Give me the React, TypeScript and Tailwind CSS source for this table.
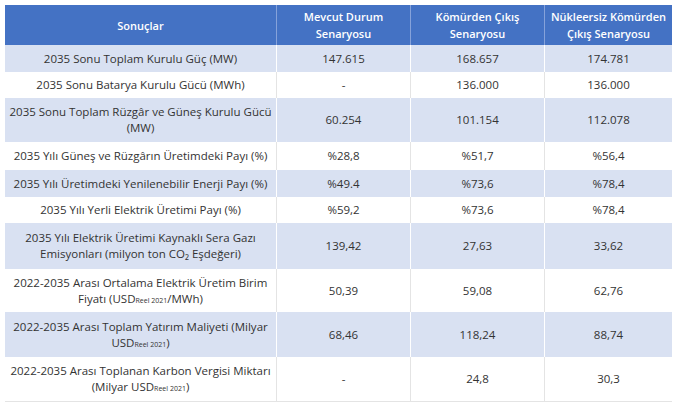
import type { ReactNode } from "react";

type Row = { label: ReactNode; vals: string[]; h: string; blue: boolean };

const Usd = () => (
  <>
    USD<span className="text-[7px] leading-none">Reel 2021</span>
  </>
);

const rows: Row[] = [
  { label: "2035 Sonu Toplam Kurulu Güç (MW)", vals: ["147.615", "168.657", "174.781"], h: "h-[27px]", blue: true },
  { label: "2035 Sonu Batarya Kurulu Gücü (MWh)", vals: ["-", "136.000", "136.000"], h: "h-[26px]", blue: false },
  {
    label: (
      <>
        2035 Sonu Toplam Rüzgâr ve Güneş Kurulu Gücü
        <br />
        (MW)
      </>
    ),
    vals: ["60.254", "101.154", "112.078"],
    h: "h-[44px]",
    blue: true,
  },
  { label: "2035 Yılı Güneş ve Rüzgârın Üretimdeki Payı (%)", vals: ["%28,8", "%51,7", "%56,4"], h: "h-[28px]", blue: false },
  { label: "2035 Yılı Üretimdeki Yenilenebilir Enerji Payı (%)", vals: ["%49.4", "%73,6", "%78,4"], h: "h-[27px]", blue: true },
  { label: "2035 Yılı Yerli Elektrik Üretimi Payı (%)", vals: ["%59,2", "%73,6", "%78,4"], h: "h-[26px]", blue: false },
  {
    label: (
      <>
        2035 Yılı Elektrik Üretimi Kaynaklı Sera Gazı
        <br />
        Emisyonları (milyon ton CO₂ Eşdeğeri)
      </>
    ),
    vals: ["139,42", "27,63", "33,62"],
    h: "h-[46px]",
    blue: true,
  },
  {
    label: (
      <>
        2022-2035 Arası Ortalama Elektrik Üretim Birim
        <br />
        Fiyatı (<Usd />/MWh)
      </>
    ),
    vals: ["50,39", "59,08", "62,76"],
    h: "h-[43px]",
    blue: false,
  },
  {
    label: (
      <>
        2022-2035 Arası Toplam Yatırım Maliyeti (Milyar
        <br />
        <Usd />)
      </>
    ),
    vals: ["68,46", "118,24", "88,74"],
    h: "h-[45px]",
    blue: true,
  },
  {
    label: (
      <>
        2022-2035 Arası Toplanan Karbon Vergisi Miktarı
        <br />
        (Milyar <Usd />)
      </>
    ),
    vals: ["-", "24,8", "30,3"],
    h: "h-[44px]",
    blue: false,
  },
];

const cols = "grid grid-cols-[271px_134px_134px_128px]";

export default function App() {
  return (
    <div className="w-[685px] h-[410px] bg-white pt-[5px] pl-[5px] font-['Open_Sans',sans-serif] text-[#333333]">
      <div className="w-[667px] border-b border-[#e4e4e4]">
        <div className={`${cols} h-[40px] bg-[#4472c4] text-white font-semibold text-[11px] leading-[17px]`}>
          <div className="flex items-center justify-center text-center">Sonuçlar</div>
          <div className="flex items-center justify-center text-center border-l border-[#86a2da] px-3">Mevcut Durum Senaryosu</div>
          <div className="flex items-center justify-center text-center border-l border-[#86a2da] px-6">Kömürden Çıkış Senaryosu</div>
          <div className="flex items-center justify-center text-center border-l border-[#86a2da] px-1">Nükleersiz Kömürden Çıkış Senaryosu</div>
        </div>
        {rows.map((r, i) => (
          <div
            key={i}
            className={`${cols} ${r.h} ${r.blue ? "bg-[#d9e1f2]" : "bg-white"} text-[11.5px] leading-[16px]`}
          >
            <div className="flex items-center justify-center text-center whitespace-nowrap">
              <span>{r.label}</span>
            </div>
            {r.vals.map((v, j) => (
              <div
                key={j}
                className={`flex items-center justify-center border-l ${r.blue ? "border-white" : "border-[#e4e4e4]"}`}
              >
                {v}
              </div>
            ))}
          </div>
        ))}
      </div>
    </div>
  );
}
